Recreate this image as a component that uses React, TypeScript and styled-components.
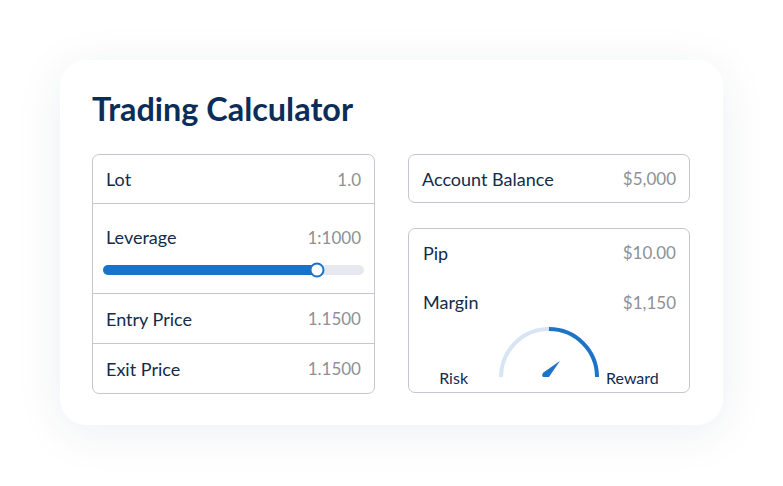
import React from 'react';
import styled, { createGlobalStyle } from 'styled-components';

const GlobalStyle = createGlobalStyle`
  html, body {
    margin: 0;
    padding: 0;
    background: #ffffff;
    font-family: Lato, "Open Sans", sans-serif;
  }
`;

const Page = styled.div`
  width: 783px;
  height: 486px;
  padding: 60px 0 0 60px;
  box-sizing: border-box;
`;

const Card = styled.div`
  width: 663px;
  height: 365px;
  box-sizing: border-box;
  padding: 29px 33px 0 32px;
  background: #ffffff;
  border-radius: 26px;
  box-shadow: 0 8px 48px rgba(30, 45, 80, 0.08);
`;

const Title = styled.h1`
  margin: 0 0 25px 0;
  font-size: 32.4px;
  line-height: 40px;
  font-weight: 700;
  color: #0b2d58;
`;

const Columns = styled.div`
  display: grid;
  grid-template-columns: 283px 282px;
  column-gap: 33px;
  align-items: start;
`;

const RightColumn = styled.div`
  display: flex;
  flex-direction: column;
  gap: 25px;
`;

const Panel = styled.div`
  border: 1px solid #c4c7cd;
  border-radius: 7px;
  box-sizing: border-box;
`;

const Row = styled.div<{ $h?: number }>`
  height: ${(p) => p.$h ?? 49}px;
  display: flex;
  align-items: center;
  justify-content: space-between;
  padding: 0 13px;
  & + & {
    border-top: 1px solid #c4c7cd;
  }
`;

const SliderRow = styled.div`
  height: 91px;
  border-top: 1px solid #c4c7cd;
  border-bottom: 1px solid #c4c7cd;
  display: flex;
  flex-direction: column;
  padding: 19px 10px 0 10px;
  box-sizing: border-box;
`;

const Line = styled.div`
  display: flex;
  align-items: center;
  justify-content: space-between;
  padding: 0 3px;
  height: 28px;
`;

const Label = styled.span`
  font-size: 18px;
  color: #122b4c;
`;

const Value = styled.span`
  font-size: 17px;
  color: #8d9096;
`;

const Track = styled.div`
  position: relative;
  margin-top: 14px;
  height: 10px;
  border-radius: 5px;
  background: #e5e8ed;
`;

const Fill = styled.div`
  height: 100%;
  border-radius: 5px;
  background: #1b72c9;
`;

const Knob = styled.div`
  position: absolute;
  top: 50%;
  width: 11px;
  height: 11px;
  border-radius: 50%;
  background: #ffffff;
  border: 2px solid #1b72c9;
  transform: translate(-50%, -50%);
`;

const ResultPanel = styled(Panel)`
  height: 165px;
  padding: 0 13px;
`;

const ResultRow = styled.div<{ $h: number }>`
  height: ${(p) => p.$h}px;
  display: flex;
  align-items: center;
  justify-content: space-between;
  padding-left: 1px;
`;

const GaugeRow = styled.div`
  display: flex;
  justify-content: center;
  align-items: flex-end;
  height: 59px;
`;

const GaugeLabel = styled.span<{ $gap: 'left' | 'right' }>`
  font-size: 16px;
  color: #122b4c;
  line-height: 18px;
  ${(p) => (p.$gap === 'left' ? 'margin-right: 31px;' : 'margin-left: 7px;')}
`;

const GaugeSvg = styled.svg`
  display: block;
  margin-bottom: 10px;
`;

const Gauge: React.FC = () => (
  <GaugeSvg width={100} height={50} viewBox="0 0 100 50">
    <path d="M 2 50 A 48 48 0 0 1 50 2" fill="none" stroke="#d6e4f3" strokeWidth={4} />
    <path d="M 50 2 A 48 48 0 0 1 98 50" fill="none" stroke="#1c73c8" strokeWidth={4} />
    <path
      d="M -3.6 0 L 0 -20 L 3.6 0 A 3.6 3.6 0 0 1 -3.6 0 Z"
      fill="#1c73c8"
      transform="translate(47 48) rotate(45)"
    />
  </GaugeSvg>
);

const leverage = 0.82;

const App: React.FC = () => (
  <>
    <GlobalStyle />
    <Page>
      <Card>
        <Title>Trading Calculator</Title>
        <Columns>
          <Panel>
            <Row $h={48}>
              <Label>Lot</Label>
              <Value>1.0</Value>
            </Row>
            <SliderRow>
              <Line>
                <Label>Leverage</Label>
                <Value>1:1000</Value>
              </Line>
              <Track>
                <Fill style={{ width: `${leverage * 100}%` }} />
                <Knob style={{ left: `${leverage * 100}%` }} />
              </Track>
            </SliderRow>
            <Row $h={49}>
              <Label>Entry Price</Label>
              <Value>1.1500</Value>
            </Row>
            <Row $h={49}>
              <Label>Exit Price</Label>
              <Value>1.1500</Value>
            </Row>
          </Panel>
          <RightColumn>
            <Panel>
              <Row $h={47}>
                <Label>Account Balance</Label>
                <Value>$5,000</Value>
              </Row>
            </Panel>
            <ResultPanel>
              <ResultRow $h={47}>
                <Label>Pip</Label>
                <Value>$10.00</Value>
              </ResultRow>
              <ResultRow $h={52}>
                <Label>Margin</Label>
                <Value>$1,150</Value>
              </ResultRow>
              <GaugeRow>
                <GaugeLabel $gap="left">Risk</GaugeLabel>
                <Gauge />
                <GaugeLabel $gap="right">Reward</GaugeLabel>
              </GaugeRow>
            </ResultPanel>
          </RightColumn>
        </Columns>
      </Card>
    </Page>
  </>
);

export default App;
